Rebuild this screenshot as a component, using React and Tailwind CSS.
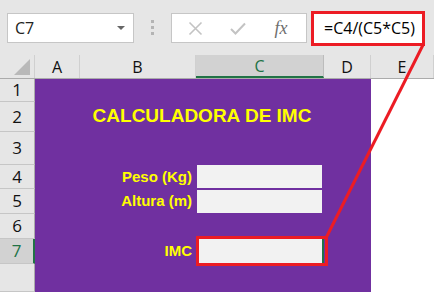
const UI = { fontFamily: '"Open Sans", "Noto Sans", sans-serif' }
const CELL = { fontFamily: '"Liberation Sans", Arial, sans-serif' }

const COLS = [
  { id: 'A', w: 'w-[45px]' },
  { id: 'B', w: 'w-[116px]' },
  { id: 'C', w: 'w-[128px]', active: true },
  { id: 'D', w: 'w-[47px]' },
  { id: 'E', w: 'flex-1' },
]

const ROWS = [
  { n: 1, h: 'h-[23px]' },
  { n: 2, h: 'h-[30px]' },
  { n: 3, h: 'h-[33px]' },
  { n: 4, h: 'h-[24px]' },
  { n: 5, h: 'h-[25px]' },
  { n: 6, h: 'h-[25px]' },
  { n: 7, h: 'h-[25px]', active: true },
  { n: '', h: 'flex-1' },
]

function FormulaBar() {
  return (
    <div className="h-[55px] shrink-0 bg-[#e6e6e6] flex items-start pt-[12px] pl-[7px]" style={UI}>
      {/* name box */}
      <div className="w-[127px] h-[30px] mt-[1px] bg-white border border-[#c6c6c6] flex items-center justify-between pl-[7px] pr-[8px]">
        <span className="text-[16px] text-[#222]">C7</span>
        <svg width="8" height="4" viewBox="0 0 8 4"><path d="M0 0h8L4 4z" fill="#666" /></svg>
      </div>
      {/* grip dots */}
      <div className="w-[37px] flex flex-col items-center gap-[3px] pt-[8px]">
        <div className="w-[3px] h-[3px] bg-[#b4b4b4]" />
        <div className="w-[3px] h-[3px] bg-[#b4b4b4]" />
        <div className="w-[3px] h-[3px] bg-[#b4b4b4]" />
      </div>
      {/* cancel / enter / fx */}
      <div className="w-[136px] h-[30px] mt-[1px] bg-white border border-[#c6c6c6] flex items-center">
        <div className="w-[44px] flex justify-center pl-[2px]">
          <svg width="15" height="15" viewBox="0 0 15 15"><path d="M1.5 1.5l12 12M13.5 1.5l-12 12" stroke="#c3c3c3" strokeWidth="1.6" /></svg>
        </div>
        <div className="w-[44px] flex justify-center">
          <svg width="16" height="13" viewBox="0 0 16 13"><path d="M1 7l4.5 4.5L15 1.5" stroke="#c3c3c3" strokeWidth="2" fill="none" /></svg>
        </div>
        <div className="flex-1 flex justify-center pr-[4px]">
          <span className="text-[18px] italic text-[#6e6e6e] leading-none" style={{ fontFamily: '"Liberation Serif", serif' }}>fx</span>
        </div>
      </div>
      {/* formula input, with red highlight */}
      <div className="ml-[4px] relative w-[114px] h-[30px] mt-[1px] bg-white flex items-center pl-[13px]">
        <span className="text-[16px] text-black whitespace-nowrap">=C4/(C5*C5)</span>
        <div className="absolute left-0 -top-[2px] right-0 -bottom-[3px] border-[3px] border-[#ec1c24]" />
      </div>
    </div>
  )
}

function ColumnHeader() {
  return (
    <div className="h-[24px] shrink-0 flex bg-[#e6e6e6] border-b border-[#ababab]" style={UI}>
      <div className="w-[35px] relative border-r border-[#d0d0d0]">
        <svg className="absolute right-[4px] bottom-[3px]" width="16" height="16" viewBox="0 0 16 16"><path d="M16 0V16H0z" fill="#b9b9b9" /></svg>
      </div>
      {COLS.map(c => (
        <div
          key={c.id}
          className={`${c.w} flex items-center justify-center text-[16px] ${
            c.active
              ? 'bg-[#d2d2d2] text-[#217346] border-b-2 border-[#217346] border-r border-r-[#bcbcbc]'
              : 'text-[#111] border-r border-[#d0d0d0]'
          }`}
        >
          {c.id}
        </div>
      ))}
    </div>
  )
}

function RowHeaders() {
  return (
    <div className="w-[35px] flex flex-col bg-[#e6e6e6]" style={UI}>
      {ROWS.map((r, i) => (
        <div
          key={i}
          className={`${r.h} shrink-0 box-border border-b border-[#c6c6c6] flex items-center justify-center text-[17px] ${
            r.active
              ? 'bg-[#d2d2d2] text-[#217346] border-r-2 border-r-[#217346]'
              : 'text-[#111] border-r border-r-[#ababab]'
          }`}
        >
          {r.n}
        </div>
      ))}
    </div>
  )
}

function Label({ children }) {
  return (
    <div className="w-[116px] flex items-center justify-end pr-[4px] text-[15px] font-bold text-[#ffff00]">
      {children}
    </div>
  )
}

function Sheet() {
  return (
    <div className="flex-1 min-h-0 flex overflow-hidden">
      <RowHeaders />
      <div className="w-[336px] bg-[#7030a0] flex flex-col" style={CELL}>
        <div className="h-[23px] shrink-0" />
        <div className="h-[30px] shrink-0 flex">
          <div className="w-[45px]" />
          <div className="w-[244px] flex items-center justify-center text-[19px] font-bold text-[#ffff00] pb-[1px]">
            CALCULADORA DE IMC
          </div>
        </div>
        <div className="h-[33px] shrink-0" />
        <div className="h-[24px] shrink-0 flex">
          <div className="w-[45px]" />
          <Label>Peso (Kg)</Label>
          <div className="w-[128px] pl-[1px] pr-[2px] pb-[1px]">
            <div className="h-full bg-[#f2f2f2]" />
          </div>
        </div>
        <div className="h-[25px] shrink-0 flex">
          <div className="w-[45px]" />
          <Label>Altura (m)</Label>
          <div className="w-[128px] pl-[1px] pr-[2px] py-[1px]">
            <div className="h-full bg-[#f2f2f2]" />
          </div>
        </div>
        <div className="h-[25px] shrink-0" />
        <div className="h-[25px] shrink-0 flex">
          <div className="w-[45px]" />
          <Label>IMC</Label>
          <div className="w-[128px] relative pl-[3px] pb-[1px]">
            <div className="h-full bg-[#f2f2f2] border-r-2 border-[#217346]" />
            <div className="absolute left-0 -top-[3px] -right-[4px] -bottom-[2px] border-[3px] border-[#ec1c24]" />
          </div>
        </div>
      </div>
      <div className="flex-1 bg-white" />
    </div>
  )
}

export default function App() {
  return (
    <div className="w-[434px] h-[292px] overflow-hidden relative flex flex-col bg-white">
      <FormulaBar />
      <ColumnHeader />
      <Sheet />
      {/* callout line from IMC cell to formula */}
      <svg className="absolute inset-0 pointer-events-none" width="434" height="292" viewBox="0 0 434 292">
        <line x1="326.5" y1="237" x2="423" y2="45" stroke="#ec1c24" strokeWidth="3" />
      </svg>
    </div>
  )
}
